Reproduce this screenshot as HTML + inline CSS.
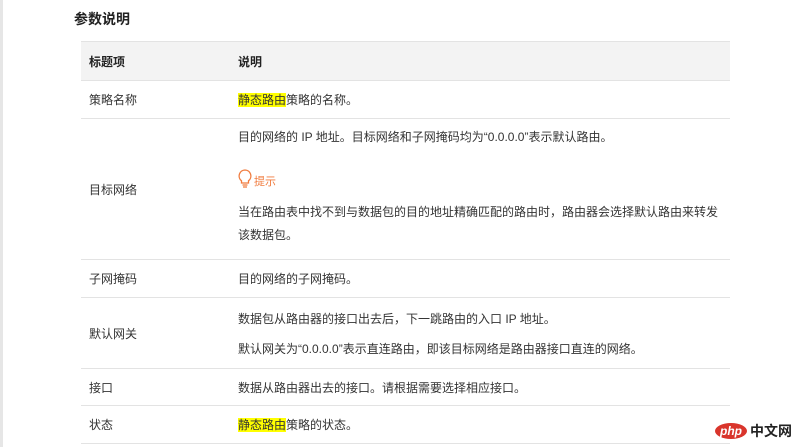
<!DOCTYPE html>
<html><head><meta charset="utf-8"><style>
body{margin:0;width:796px;height:447px;overflow:hidden;background:#fff;font-family:"Liberation Sans","Noto Sans CJK SC",sans-serif;color:#333;position:relative}
.lb{position:absolute;left:0;top:0;width:3px;height:447px;background:#e6e6e6}
h3{position:absolute;left:74px;top:9px;margin:0;font-size:14px;font-weight:bold;color:#222}
table{position:absolute;left:81px;top:41px;width:649px;border-collapse:collapse;font-size:12px}
td,th{border-top:1px solid #e3e3e3;border-bottom:1px solid #e3e3e3;text-align:left;vertical-align:middle;padding:0 8px}
th{background:#f3f3f3;height:38px;font-weight:bold;color:#222;border-top:1px solid #e3e3e3}
td:first-child,th:first-child{width:133px}
.hl{background:#ffff00}
p{margin:0}
.tip{color:#f07a3c;font-size:11px;display:flex;align-items:flex-end}
.logo{position:absolute;left:715px;top:421px;display:flex;align-items:center}
.php{background:#d9352c;color:#fff;font-style:italic;font-weight:bold;font-size:12px;border-radius:50%;padding:0 5px;height:16px;line-height:16px}
.zw{font-size:14px;font-weight:bold;color:#222;margin-left:3px}
</style></head><body>
<div class="lb"></div>
<h3>参数说明</h3>
<table>
<tr><th>标题项</th><th>说明</th></tr>
<tr><td style="height:37px">策略名称</td><td><span class="hl">静态路由</span>策略的名称。</td></tr>
<tr><td style="height:140px">目标网络</td><td>
<p style="margin-top:-4px">目的网络的 IP 地址。目标网络和子网掩码均为“0.0.0.0”表示默认路由。</p>
<div class="tip" style="margin-top:24px"><svg width="14" height="20" viewBox="0 0 14 20"><path d="M7 1a6 6 0 0 0-3.5 10.8V14h7v-2.2A6 6 0 0 0 7 1z M4.5 16h5 M5 18h4" fill="none" stroke="#f07a3c" stroke-width="1.3"/></svg><span style="margin-left:2px">提示</span></div>
<p style="margin-top:12px;line-height:23px">当在路由表中找不到与数据包的目的地址精确匹配的路由时，路由器会选择默认路由来转发该数据包。</p></td></tr>
<tr><td style="height:37px">子网掩码</td><td>目的网络的子网掩码。</td></tr>
<tr><td style="height:70px">默认网关</td><td><p>数据包从路由器的接口出去后，下一跳路由的入口 IP 地址。</p><p style="margin-top:13px">默认网关为“0.0.0.0”表示直连路由，即该目标网络是路由器接口直连的网络。</p></td></tr>
<tr><td style="height:36px">接口</td><td>数据从路由器出去的接口。请根据需要选择相应接口。</td></tr>
<tr><td style="height:37px">状态</td><td><span class="hl">静态路由</span>策略的状态。</td></tr>
</table>
<div class="logo"><span class="php">php</span><span class="zw">中文网</span></div>
</body></html>
